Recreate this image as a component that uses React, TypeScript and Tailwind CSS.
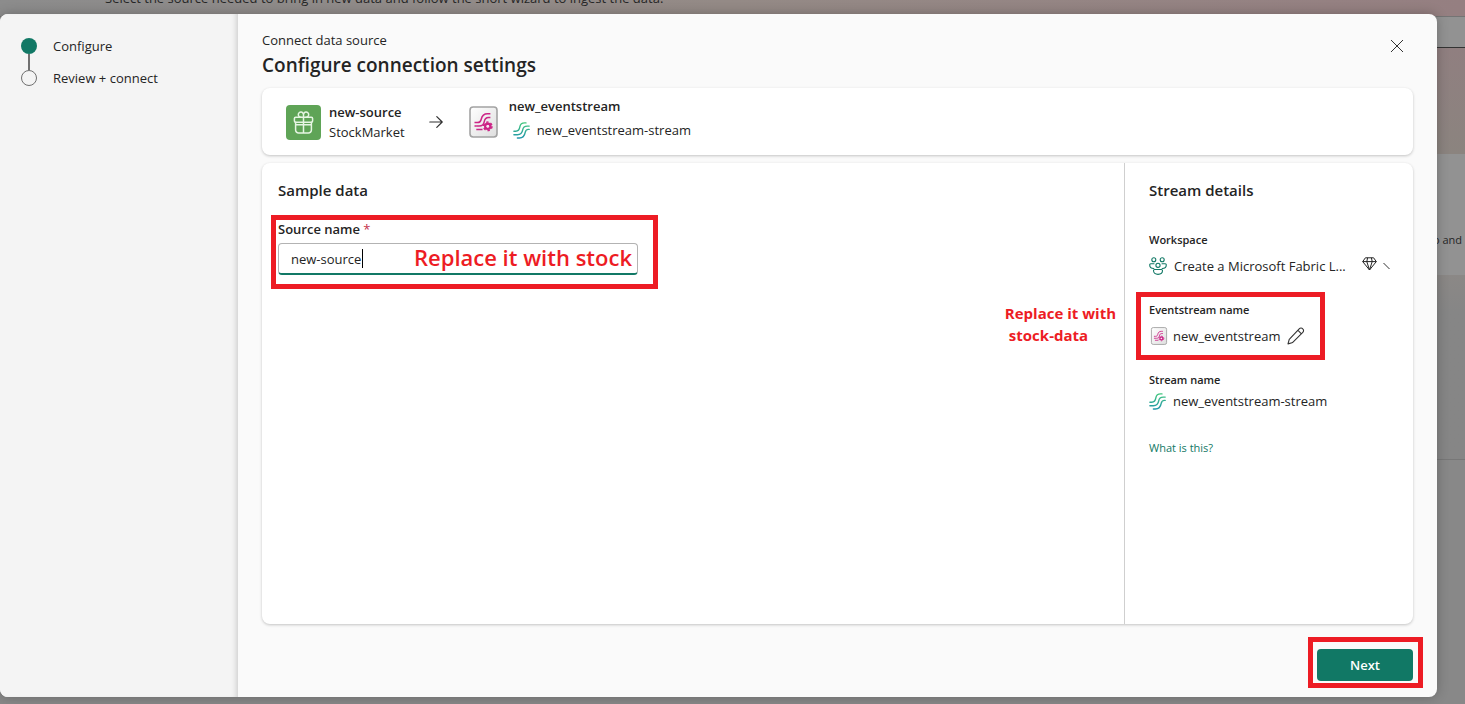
import { useState } from "react";

function GiftIcon() {
  return (
    <svg className="size-[35px] shrink-0" viewBox="0 0 35 35" fill="none" aria-hidden="true">
      <rect width="35" height="35" rx="4" fill="#5fa457" />
      <g stroke="#e6f5e3" strokeWidth="1.5" strokeLinejoin="round" strokeLinecap="round">
        <rect x="8.4" y="12.2" width="18.2" height="5" rx="1.2" />
        <path d="M9.6 17.2v7.800a3 3 0 0 0 3 3h9.800a3 3 0 0 0 3-3v-7.800M9.600 19.800h15.800M17.500 12.200v15.800" />
        <path d="M17.500 12.200V9.800a2.600 2.600 0 1 0-2.600 2.400M17.500 12.200V9.800a2.600 2.600 0 1 1 2.600 2.400" />
      </g>
    </svg>
  );
}

function ArrowIcon() {
  return (
    <svg className="h-4 w-[14px] shrink-0" viewBox="0 0 14 16" fill="none" stroke="#303030" strokeWidth="1.2" strokeLinecap="round" strokeLinejoin="round" aria-hidden="true">
      <path d="M.8 8h12.2M7.8 2.600 13.200 8l-5.400 5.400" />
    </svg>
  );
}

function EventstreamIcon({ className }: { className: string }) {
  return (
    <svg className={className} viewBox="0 0 29 32" fill="none" aria-hidden="true">
      <defs>
        <linearGradient id="tile" x1="0" y1="0" x2="1" y2="1">
          <stop offset="0" stopColor="#ffffff" />
          <stop offset="1" stopColor="#dedede" />
        </linearGradient>
      </defs>
      <rect x="1" y="1" width="27" height="30" rx="3.2" fill="url(#tile)" stroke="#a3a3a3" strokeWidth="1.6" />
      <g stroke="#cc2587" strokeWidth="1.500">
        <path d="M5.500 16.600h3c2.600 0 3.300-1.300 3.800-3.600.8-3.700 3-5.300 6.200-5.300h2.900" />
        <path d="M7.300 20h3c3.300 0 4.400-1.400 4.900-4.200.5-2.700 1.800-4.200 4.300-4.200h1.900" />
        <path d="M5.500 20h2M7.300 23.600h6.200" />
      </g>
      <circle cx="18.800" cy="20.300" r="2.600" stroke="#cc2587" strokeWidth="2.400" />
      <circle cx="18.800" cy="20.300" r="4.200" stroke="#cc2587" strokeWidth="1.500" strokeDasharray="2.400 2" />
      <circle cx="18.800" cy="20.300" r="1.200" fill="#fbe6f3" />
    </svg>
  );
}

function StreamIcon() {
  return (
    <svg className="size-[17px] shrink-0" viewBox="0 0 17 17" fill="none" strokeWidth="1.400" strokeLinecap="round" aria-hidden="true">
      <defs>
        <linearGradient id="flow" x1="0" y1="0" x2="0" y2="17" gradientUnits="userSpaceOnUse">
          <stop offset="0" stopColor="#45c97c" />
          <stop offset="1" stopColor="#2093ad" />
        </linearGradient>
      </defs>
      <g stroke="url(#flow)">
        <path d="M13 .9h-1.400C8.700.900 7.300 2.300 6.900 4.700 6.400 7.900 5.300 9.300 2.700 9.300H.9" />
        <path d="M16.200 4.100h-2c-2.800 0-4.100 1.300-4.500 3.800-.6 3.500-2.100 4.800-5.300 4.800H.9" />
        <path d="M16.200 7.400h-.8c-1.900 0-2.800.9-3.200 3-.7 3.900-2.200 5.600-5.800 5.600H4.400" />
      </g>
    </svg>
  );
}

function PeopleIcon() {
  return (
    <svg className="size-[18px] shrink-0" viewBox="0 0 18 18" fill="none" stroke="#117865" strokeWidth="1.100" strokeLinejoin="round" strokeLinecap="round" aria-hidden="true">
      <circle cx="4.800" cy="2.700" r="2" />
      <circle cx="13.200" cy="2.700" r="2" />
      <circle cx="9" cy="8.300" r="2.100" />
      <path d="M5 6.700H1.700a1 1 0 0 0-1 1c0 2.200 1.500 3.800 4.100 3.800M13 6.700h3.300a1 1 0 0 1 1 1c0 2.200-1.500 3.800-4.100 3.800" />
      <path d="M5.600 12.500h6.800a1.100 1.100 0 0 1 1.100 1.100c0 2.300-1.900 3.800-4.500 3.800s-4.500-1.500-4.500-3.800a1.100 1.100 0 0 1 1.100-1.100z" />
    </svg>
  );
}

function DiamondIcon() {
  return (
    <svg className="mb-1 h-[14px] w-[15px] shrink-0" viewBox="0 0 15 14" fill="none" stroke="#242424" strokeWidth="1" strokeLinejoin="round" aria-hidden="true">
      <path d="M3.400.8h8.200l2.700 3.800-6.800 8.400L.7 4.600zM.7 4.600h13.600M4.800 4.600 7.500 13l2.700-8.400M4.800 4.600 5.600.8M10.200 4.600 9.400.8" />
    </svg>
  );
}

function PencilIcon() {
  return (
    <svg className="size-[18px]" viewBox="0 0 18 18" fill="none" stroke="#333333" strokeWidth="1.100" strokeLinejoin="round" aria-hidden="true">
      <path d="M12.200 1.800a2.500 2.500 0 0 1 3.600 0 2.500 2.500 0 0 1 0 3.600L6 15.200c-.3.300-.6.500-1 .6l-4 1.100 1.100-4c.1-.4.300-.7.600-1zM10.800 3.200l3.600 3.600" />
    </svg>
  );
}

function Highlight({ className }: { className: string }) {
  return <span aria-hidden="true" className={`pointer-events-none absolute border-5 border-[#ed1c24] ${className}`} />;
}

function Backdrop() {
  return (
    <div className="absolute inset-0 flex flex-col bg-[#848484]">
      <div className="h-4 shrink-0 overflow-hidden bg-linear-to-r from-[#8c8c8c] via-[#948a86] to-[#957f81]">
        <p className="-mt-3 pl-[105px] text-[13px] leading-5 text-[#262626]">
          Select the source needed to bring in new data and follow the short wizard to ingest the data.
        </p>
      </div>
      <div className="h-8 shrink-0 border-t border-b border-t-[#747474] border-b-[#333333] bg-[#929292]" />
      <div className="h-[106px] shrink-0 bg-linear-to-b from-[#907f80] to-[#8b847f]" />
      <div className="flex h-[121px] shrink-0 items-center justify-end bg-[#929292] pt-[50px] pr-[3px]">
        <p className="text-[11px] leading-4 text-[#262626]">to and</p>
      </div>
      <div className="h-[185px] shrink-0 border-b border-[#777777] bg-linear-to-b from-[#8b8886] to-[#868686] to-20%" />
      <div className="grow bg-[#888888]" />
    </div>
  );
}

function Steps() {
  return (
    <nav aria-label="Progress" className="w-[238px] shrink-0 bg-[#f4f4f4] pt-4 pl-[21px] shadow-[inset_-5px_0_5px_-3px_#d0d0d0]">
      <ol className="text-[13px]">
        <li className="flex h-8 items-center gap-4" aria-current="step">
          <span className="flex h-8 w-4 flex-col items-center pt-2">
            <span className="size-4 shrink-0 rounded-full bg-[#117865]" />
            <span className="w-[2px] grow bg-[#707070]" />
          </span>
          <span className="leading-[22px]">Configure</span>
        </li>
        <li className="flex h-8 items-center gap-4">
          <span className="flex h-8 w-4 flex-col items-center pb-2">
            <span className="w-[2px] grow bg-[#707070]" />
            <span className="size-4 shrink-0 rounded-full border border-[#707070]" />
          </span>
          <span className="leading-[22px]">Review + connect</span>
        </li>
      </ol>
    </nav>
  );
}

function SourceSummary() {
  return (
    <section className="flex shrink-0 items-end rounded-lg bg-white px-6 pt-[6px] pb-[13px] shadow-[0_1px_3px_#00000038]">
      <div className="flex h-10 items-center gap-2">
        <GiftIcon />
        <div className="text-[13px] leading-5">
          <p className="font-semibold">new-source</p>
          <p>StockMarket</p>
        </div>
      </div>
      <div className="flex h-10 items-center pr-[26px] pl-6">
        <ArrowIcon />
      </div>
      <div className="flex h-10 items-center pr-[11px]">
        <EventstreamIcon className="h-8 w-[29px] shrink-0" />
      </div>
      <div className="text-[13px] leading-6">
        <p className="font-semibold">new_eventstream</p>
        <p className="flex items-center gap-[7px] pl-1">
          <StreamIcon />
          new_eventstream-stream
        </p>
      </div>
    </section>
  );
}

function StreamDetails() {
  return (
    <aside className="w-[289px] shrink-0 border-l border-[#cfcfcf] pt-4 pl-6">
      <h2 className="text-[15px] leading-[22px] font-semibold">Stream details</h2>
      <dl className="mt-[31px] flex flex-col gap-[26px] text-[13px] leading-5">
        <div>
          <dt className="text-[11px] leading-4 font-semibold">Workspace</dt>
          <dd className="mt-2 flex items-center">
            <PeopleIcon />
            <span className="ml-[7px] w-[188px] truncate">Create a Microsoft Fabric L...</span>
            <DiamondIcon />
            <svg className="ml-[6px] h-2 w-[7px]" viewBox="0 0 7 8" stroke="#333333" aria-hidden="true">
              <path d="m.5 1 6 6" />
            </svg>
          </dd>
        </div>
        <div className="relative">
          <Highlight className="-top-[10px] -left-[13px] h-[68px] w-[189px]" />
          <div className="absolute top-0 right-full mr-[33px] text-[15px] leading-[22px] font-bold whitespace-nowrap text-[#ed1c24]">
            Replace it with
            <span className="block pl-1">stock-data</span>
          </div>
          <dt className="text-[11px] leading-4 font-semibold">Eventstream name</dt>
          <dd className="mt-2 flex items-center">
            <EventstreamIcon className="mr-1 h-[18px] w-5 shrink-0" />
            new_eventstream
            <button type="button" aria-label="Edit eventstream name" className="ml-[7px]">
              <PencilIcon />
            </button>
          </dd>
        </div>
        <div>
          <dt className="text-[11px] leading-4 font-semibold">Stream name</dt>
          <dd className="mt-[3px] flex items-center gap-[7px]">
            <StreamIcon />
            new_eventstream-stream
          </dd>
        </div>
      </dl>
      <a href="#stream" className="mt-[29px] block text-[11px] leading-4 text-[#117865]">
        What is this?
      </a>
    </aside>
  );
}

export default function App() {
  const [name, setName] = useState("new-source");
  return (
    <div className="relative flex h-screen flex-col overflow-hidden pt-[14px] pr-7 pb-[7px] font-['Open_Sans','Noto_Sans',sans-serif] text-[#242424]">
      <Backdrop />
      <div role="dialog" aria-labelledby="title" className="relative flex min-h-0 grow overflow-hidden rounded-lg bg-[#fafafa] shadow-[0_0_12px_#00000040]">
        <Steps />
        <main className="flex min-w-0 grow flex-col px-6 pt-4 pb-4">
          <header className="flex justify-between pb-2">
            <div>
              <p className="text-[13px] leading-5">Connect data source</p>
              <h1 id="title" className="text-[19px] leading-[30px] font-semibold">Configure connection settings</h1>
            </div>
            <button type="button" aria-label="Close" className="flex size-8 items-center justify-center">
              <svg className="size-[14px]" viewBox="0 0 14 14" stroke="#333333" strokeWidth="1" aria-hidden="true">
                <path d="m1 1 12 12M13 1 1 13" />
              </svg>
            </button>
          </header>
          <SourceSummary />
          <div className="mt-2 flex min-h-0 grow rounded-lg bg-white shadow-[0_1px_3px_#00000038]">
            <section className="min-w-0 grow px-4 pt-4">
              <h2 className="text-[15px] leading-[22px] font-semibold">Sample data</h2>
              <div className="relative mt-[18px] w-[360px]">
                <Highlight className="-top-1 -left-[7px] h-[74px] w-[387px]" />
                <label htmlFor="source" className="block text-[13px] leading-5 font-semibold">
                  Source name <span className="font-normal text-[#c4314b]">*</span>
                </label>
                <div className="relative mt-1">
                  <input
                    id="source"
                    value={name}
                    onChange={(e) => setName(e.target.value)}
                    className="block h-8 w-full rounded-sm border border-b-2 border-[#b3b3b3] border-b-[#117865] bg-white px-3 text-[13px] outline-none"
                  />
                  <span aria-hidden="true" className="absolute top-[6px] left-[84px] h-[19px] w-px bg-black" />
                  <span className="pointer-events-none absolute top-0 right-[6px] text-[22px] leading-7 font-semibold whitespace-nowrap text-[#ed1c24]">
                    Replace it with stock
                  </span>
                </div>
              </div>
            </section>
            <StreamDetails />
          </div>
          <footer className="flex shrink-0 justify-end pt-[25px]">
            <div className="relative">
              <Highlight className="-top-3 -left-[9px] h-[51px] w-[115px]" />
              <button type="button" className="h-8 w-24 rounded-sm bg-[#117865] text-[13px] leading-5 font-semibold text-white">
                Next
              </button>
            </div>
          </footer>
        </main>
      </div>
    </div>
  );
}
